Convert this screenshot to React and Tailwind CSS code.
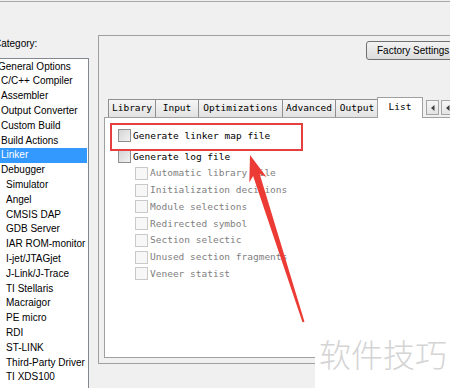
const categories = [
  { label: 'General Options', level: 0 },
  { label: 'C/C++ Compiler', level: 1 },
  { label: 'Assembler', level: 1 },
  { label: 'Output Converter', level: 1 },
  { label: 'Custom Build', level: 1 },
  { label: 'Build Actions', level: 1 },
  { label: 'Linker', level: 1, selected: true },
  { label: 'Debugger', level: 1 },
  { label: 'Simulator', level: 2 },
  { label: 'Angel', level: 2 },
  { label: 'CMSIS DAP', level: 2 },
  { label: 'GDB Server', level: 2 },
  { label: 'IAR ROM-monitor', level: 2 },
  { label: 'I-jet/JTAGjet', level: 2 },
  { label: 'J-Link/J-Trace', level: 2 },
  { label: 'TI Stellaris', level: 2 },
  { label: 'Macraigor', level: 2 },
  { label: 'PE micro', level: 2 },
  { label: 'RDI', level: 2 },
  { label: 'ST-LINK', level: 2 },
  { label: 'Third-Party Driver', level: 2 },
  { label: 'TI XDS100', level: 2 },
];

const tabs = [
  { label: 'Library', w: 'w-[48px]' },
  { label: 'Input', w: 'w-[44px]' },
  { label: 'Optimizations', w: 'w-[85px]' },
  { label: 'Advanced', w: 'w-[54px]' },
  { label: 'Output', w: 'w-[44px]' },
  { label: 'List', w: 'w-[46px]', active: true },
];

const subOptions = [
  'Automatic library file',
  'Initialization decisions',
  'Module selections',
  'Redirected symbol',
  'Section selectic',
  'Unused section fragments',
  'Veneer statist',
];

const mono = { fontFamily: '"DejaVu Sans Mono", "Liberation Mono", monospace' };

function Checkbox({ disabled }) {
  return (
    <span
      className={
        disabled
          ? 'w-[13px] h-[13px] shrink-0 border border-[#c9c9c9] bg-[#f7f7f7]'
          : 'w-[13px] h-[13px] shrink-0 border border-[#8f8f8f] bg-gradient-to-br from-[#d4d4d4] to-[#f2f2f2]'
      }
    />
  );
}

function ScrollButton() {
  return (
    <div className="w-[13px] h-[15px] mt-[3px] border border-[#a5a5a5] bg-gradient-to-b from-[#f7f7f7] to-[#e3e3e3] flex items-center justify-center">
      <svg width="4" height="6" viewBox="0 0 4 6">
        <path d="M3.5 0 L0 3 L3.5 6 Z" fill="#404040" />
      </svg>
    </div>
  );
}

export default function App() {
  return (
    <div
      className="relative w-[450px] h-[388px] overflow-hidden bg-[#f0f0f0] text-[10px] text-black"
      style={{ fontFamily: '"Liberation Sans", Arial, sans-serif' }}
    >
      <div className="mt-px h-px bg-[#a8a5ab]" />

      <div className="flex items-start">
        {/* Category list */}
        <div className="shrink-0 w-[89px]">
          <div className="mt-[35px] h-[14px] leading-[14px] -ml-[6px]">Category:</div>
          <div className="mt-[7px] -ml-[4px] w-[93px] h-[340px] border border-[#828790] bg-white pt-[0.6px]">
            {categories.map((c) => (
              <div
                key={c.label}
                className={
                  (c.selected ? 'bg-[#3399ff] text-white mr-px ' : '') +
                  (c.level === 0 ? 'pl-[1px] ' : c.level === 1 ? 'pl-[4px] ' : 'pl-[9px] ') +
                  'h-[14.8px] leading-[14.8px] whitespace-nowrap'
                }
              >
                {c.label}
              </div>
            ))}
          </div>
        </div>

        {/* Options frame */}
        <div className="ml-[9px] mt-[33px] w-[372px] shrink-0 border-l border-t border-b border-[#a0a0a0] pt-[5px] pb-[5px]">
          <div className="ml-[267px] w-[92px] h-[19px] rounded-[3px] border border-[#707070] bg-gradient-to-b from-[#f3f3f3] to-[#dcdcdc] pl-[10px] leading-[17px] whitespace-nowrap">
            Factory Settings
          </div>

          <div className="mt-[37px] ml-[9px] h-[20px] flex items-end relative z-10" style={mono}>
            {tabs.map((t) =>
              t.active ? (
                <div
                  key={t.label}
                  className={t.w + ' -ml-px h-[21px] -mb-px bg-white border-l border-t border-r border-[#a0a0a0] flex items-center justify-center text-[9.5px] pb-[2px]'}
                >
                  {t.label}
                </div>
              ) : (
                <div
                  key={t.label}
                  className={t.w + ' h-[18px] border-l border-t border-r border-[#8f8f8f] -mr-px bg-gradient-to-b from-[#f6f6f6] to-[#e2e2e2] flex items-center justify-center text-[9.5px] whitespace-nowrap'}
                >
                  {t.label}
                </div>
              )
            )}
            <div className="self-start flex gap-[2px] ml-[3px]">
              <ScrollButton />
              <ScrollButton />
            </div>
          </div>

          <div className="ml-[5px] h-[241px] border border-[#a0a0a0] bg-white relative pt-[9.6px]" style={mono}>
            <div className="h-[16.7px] mb-[4.3px] pl-[13px] flex items-center gap-[2px] text-[9.5px] whitespace-nowrap">
              <Checkbox />
              <span>Generate linker map file</span>
            </div>
            <div className="h-[16.7px] pl-[13px] flex items-center gap-[2px] text-[9.5px] whitespace-nowrap">
              <Checkbox />
              <span>Generate log file</span>
            </div>
            {subOptions.map((o) => (
              <div key={o} className="h-[16.7px] pl-[30px] flex items-center gap-[2px] text-[9.5px] text-[#808080] whitespace-nowrap">
                <Checkbox disabled />
                <span>{o}</span>
              </div>
            ))}

            {/* annotation box */}
            <div className="absolute left-[5px] top-[5px] w-[193px] h-[28px] border-2 border-[#e5403f]" />
          </div>
        </div>
      </div>

      {/* annotation arrow */}
      <svg className="absolute left-0 top-0 pointer-events-none" width="450" height="388" viewBox="0 0 450 388">
        <polygon
          points="250,155 266.5,177.1 259.7,173.9 304.5,321.7 302.5,322.3 253.1,176.1 249.3,182.5"
          fill="#ec3a35"
        />
      </svg>

      {/* watermark */}
      <div className="absolute left-[315px] top-[332px] w-[135px] h-[56px] bg-white flex items-start pl-[4px] pt-[4px]">
        <span
          className="text-[32px] leading-[34px] font-light text-[#d4d4d4] whitespace-nowrap"
          style={{ fontFamily: '"Noto Sans CJK SC", sans-serif' }}
        >
          软件技巧
        </span>
      </div>
    </div>
  );
}
